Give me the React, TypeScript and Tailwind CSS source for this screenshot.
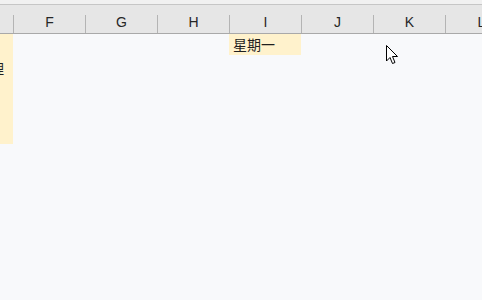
import React from "react";

const cols = ["F", "G", "H", "I", "J", "K", "L"];

export default function App() {
  return (
    <div className="relative w-[482px] h-[300px] overflow-hidden bg-[#f8f9fb]" style={{ fontFamily: '"Noto Sans", "Noto Sans CJK SC", sans-serif' }}>
      <div className="h-[5px] bg-[#f1f1f1] border-b border-[#c6c6c6]" />
      <div className="flex h-[29px] bg-[#e6e6e6] border-b border-[#a9a9a9]">
        <div className="w-[13px] shrink-0" />
        {cols.map((c) => (
          <div key={c} className="flex w-[72px] shrink-0">
            <div className="w-px h-[18px] self-end bg-[#b4b4b4]" />
            <div className="flex-1 flex items-end justify-center pb-[1px] text-[14px] leading-[20px] text-[#262626]" style={{ fontFamily: '"Liberation Sans", Arial, sans-serif' }}>
              {c}
            </div>
          </div>
        ))}
      </div>
      <div className="flex">
        <div className="w-[13px] h-[110px] shrink-0 bg-[#fff2cc] overflow-hidden flex justify-end pt-[24px]">
          <div className="shrink-0 pr-[9px] text-[14px] leading-[20px] text-[#1f1f1f]" style={{ fontFamily: '"Noto Sans CJK SC", sans-serif' }}>
            管理
          </div>
        </div>
        <div className="w-[216px] shrink-0" />
        <div className="w-[72px] shrink-0 h-[21px] bg-[#fff2cc] pl-[4px] text-[14px] leading-[21px] text-[#1f1f1f]" style={{ fontFamily: '"Noto Sans CJK SC", sans-serif' }}>
          星期一
        </div>
      </div>
      <svg className="absolute left-[386px] top-[45px]" width="13" height="20" viewBox="0 0 13 20">
        <path d="M0.5 0.5 L0.5 16 L4 12.5 L6.5 18.5 L9 17.5 L6.5 11.5 L11.5 11.5 Z" fill="#ffffff" stroke="#000000" strokeWidth="1" strokeLinejoin="miter" />
      </svg>
    </div>
  );
}
